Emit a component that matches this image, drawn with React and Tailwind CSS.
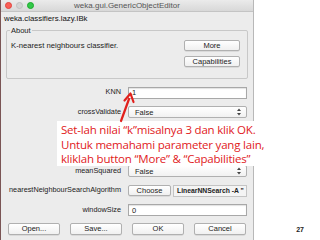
import React from "react";

const F = { fontFamily: '"Liberation Sans", Arial, sans-serif' };

function MacBtn({ children, className = "" }) {
  return (
    <div
      className={
        "h-[11px] flex items-center justify-center rounded-[2px] border border-[#b0b0b0] bg-gradient-to-b from-white to-[#f0f0f0] text-[7.5px] text-[#222] shadow-[0_0.5px_0.5px_rgba(0,0,0,0.15)] " +
        className
      }
    >
      {children}
    </div>
  );
}

function Row({ label, children }) {
  return (
    <div className="h-[19.6px] flex items-center">
      <div className="w-[121px] pr-[1px] text-right text-[7.3px] text-[#222] whitespace-nowrap">{label}</div>
      <div className="ml-[6px] w-[120px] flex items-center">{children}</div>
    </div>
  );
}

function Field({ value }) {
  return (
    <div className="h-[12px] w-[119px] bg-white border border-[#a8a8a8] shadow-[inset_0_1px_1px_rgba(0,0,0,0.12)] flex items-center pl-[3px] text-[7.5px] text-[#222]">
      {value}
    </div>
  );
}

function Select({ value }) {
  return (
    <div className="h-[12px] w-[119px] rounded-[2px] bg-gradient-to-b from-white to-[#f1f1f1] border border-[#b0b0b0] flex items-center justify-between pl-[6px] pr-[5px] text-[7.5px] text-[#222]">
      <span>{value}</span>
      {value ? (
        <svg width="4" height="8" viewBox="0 0 4 8">
          <path d="M0 3 L2 0.5 L4 3 Z M0 5 L2 7.5 L4 5 Z" fill="#444" />
        </svg>
      ) : null}
    </div>
  );
}

export default function App() {
  return (
    <div className="w-[320px] h-[240px] bg-white relative overflow-hidden flex" style={F}>
      <div className="w-[254px] h-[240px] bg-[#ececec] border-r border-[#b8b8b8] border-l border-l-[#7a5555] flex flex-col">
        {/* title bar */}
        <div className="h-[12px] shrink-0 bg-gradient-to-b from-[#ebebeb] to-[#d8d8d8] border-b border-[#c4c4c4] flex items-center relative">
          <div className="flex items-center gap-[4px] pl-[4px]">
            <span className="w-[7px] h-[7px] rounded-full bg-[#fc5f57] border-[0.5px] border-[#e0443e]" />
            <span className="w-[7px] h-[7px] rounded-full bg-[#d4d4d4] border-[0.5px] border-[#c0c0c0]" />
            <span className="w-[7px] h-[7px] rounded-full bg-[#34c84a] border-[0.5px] border-[#1aab29]" />
          </div>
          <div className="absolute inset-0 flex items-center justify-center text-[8px] text-[#555]">
            weka.gui.GenericObjectEditor
          </div>
        </div>
        {/* class name */}
        <div className="h-[14px] shrink-0 flex items-center pl-[3px] text-[7.8px] text-[#111]">
          weka.classifiers.lazy.IBk
        </div>
        {/* About group */}
        <div className="h-[49px] shrink-0 relative ml-[5px] mr-[5px] mt-[4px] border border-[#c8c8c8] rounded-[2px] flex items-start">
          <div className="absolute left-[3px] top-[-5px] bg-[#ececec] px-[1px] text-[7.5px] text-[#222] leading-[9px]">About</div>
          <div className="flex-1 pl-[4px] pt-[9px] text-[7.7px] text-[#222]">K-nearest neighbours classifier.</div>
          <div className="w-[56px] mr-[7px] mt-[9px] flex flex-col gap-[5px]">
            <MacBtn>More</MacBtn>
            <MacBtn>Capabilities</MacBtn>
          </div>
        </div>
        {/* properties */}
        <div className="mt-[4px] flex flex-col">
          <Row label="KNN"><Field value="1" /></Row>
          <Row label="crossValidate"><Select value="False" /></Row>
          <Row label=""><Select value="" /></Row>
          <Row label=""><Select value="" /></Row>
          <Row label="meanSquared"><Select value="False" /></Row>
          <Row label="nearestNeighbourSearchAlgorithm">
            <div className="flex items-center gap-[2px]">
              <MacBtn className="w-[43px]">Choose</MacBtn>
              <div className="h-[12px] w-[74px] border border-[#c4c4c4] bg-[#f4f4f4] flex items-center pl-[3px] text-[6.8px] font-bold text-[#222] whitespace-nowrap overflow-hidden">
                LinearNNSearch -A "
              </div>
            </div>
          </Row>
          <Row label="windowSize"><Field value="0" /></Row>
        </div>
        <div className="flex-1" />
        <div className="h-[16px] mb-[3px] flex items-center pl-[7px] gap-[10px]">
          <MacBtn className="w-[52px] h-[12px]">Open...</MacBtn>
          <MacBtn className="w-[52px] h-[12px]">Save...</MacBtn>
          <MacBtn className="w-[52px] h-[12px]">OK</MacBtn>
          <MacBtn className="w-[52px] h-[12px]">Cancel</MacBtn>
        </div>
      </div>
      <div className="flex-1 flex items-end justify-end pb-[5px] pr-[16px]">
        <span className="text-[7px] font-bold text-[#222]">27</span>
      </div>

      {/* annotation */}
      <div
        className="absolute left-[57px] top-[121px] w-[263px] h-[45px] bg-white pl-[4px] pt-[2px] text-[11.5px] leading-[14.5px] text-[#e1201c]"
        style={{ fontFamily: '"Open Sans", "Liberation Sans", sans-serif', letterSpacing: "-0.2px" }}
      >
        <div>Set-lah nilai “k”misalnya 3 dan klik OK.</div>
        <div>Untuk memahami parameter yang lain,</div>
        <div>kliklah button “More” &amp; “Capabilities”</div>
      </div>
      <svg className="absolute left-0 top-0" width="320" height="240" viewBox="0 0 320 240">
        <line x1="121" y1="121" x2="129" y2="99" stroke="#e1201c" strokeWidth="2.2" strokeLinecap="round" />
        <path d="M124.5 100.5 L130.5 93.5 L133.5 102" fill="none" stroke="#e1201c" strokeWidth="2.2" strokeLinecap="round" strokeLinejoin="round" />
      </svg>
    </div>
  );
}
